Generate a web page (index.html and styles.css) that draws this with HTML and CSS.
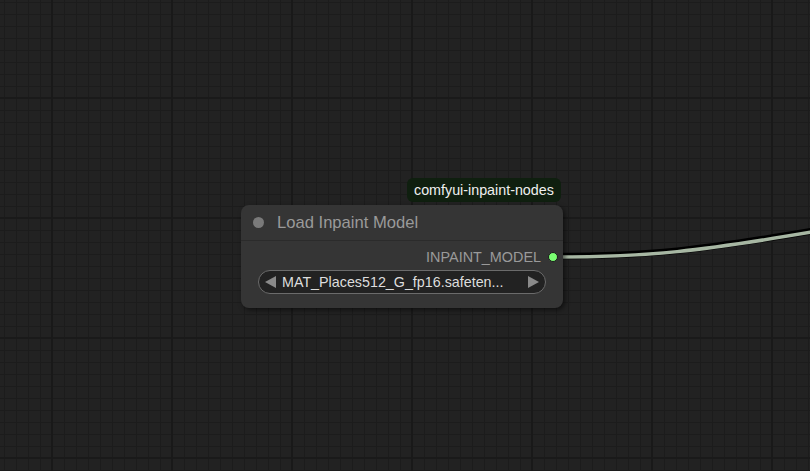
FILE: index.html
```html
<!DOCTYPE html>
<html>
<head>
<meta charset="utf-8">
<link rel="stylesheet" href="styles.css">
</head>
<body>
<div class="canvas">
  <svg class="links" width="810" height="471" viewBox="0 0 810 471">
    <path class="link-shadow" d="M556 257 C 650 257 700 251 812 232"/>
    <path class="link" d="M556 257 C 650 257 700 251 812 232"/>
  </svg>
  <div class="badge">comfyui-inpaint-nodes</div>
  <div class="node">
    <div class="node-title">
      <span class="title-dot"></span>
      <span class="title-text">Load Inpaint Model</span>
    </div>
    <div class="node-body">
      <div class="output-row">
        <span class="output-label">INPAINT_MODEL</span>
        <span class="output-dot"></span>
      </div>
      <div class="combo">
        <span class="arrow arrow-left"></span>
        <span class="combo-value">MAT_Places512_G_fp16.safeten...</span>
        <span class="arrow arrow-right"></span>
      </div>
    </div>
  </div>
</div>
</body>
</html>
```

FILE: styles.css
```css
html, body {
  margin: 0;
  padding: 0;
  width: 810px;
  height: 471px;
  overflow: hidden;
  background: #222222;
  font-family: "Liberation Sans", Arial, sans-serif;
}

.canvas {
  position: relative;
  width: 810px;
  height: 471px;
  background-color: #222222;
  background-image:
    linear-gradient(to right, #191919 0, #191919 2px, transparent 2px),
    linear-gradient(to bottom, #1a1a1a 0, #1a1a1a 2px, transparent 2px),
    linear-gradient(to right, #1c1c1c 0, #1c1c1c 1px, transparent 1px),
    linear-gradient(to bottom, #1c1c1c 0, #1c1c1c 1px, transparent 1px);
  background-size: 120px 120px, 120px 120px, 12px 12px, 12px 12px;
  background-position: 51px 0, 0 97px, 4px 0, 0 2px;
}

.links {
  position: absolute;
  left: 0;
  top: 0;
}

.link-shadow {
  fill: none;
  stroke: #000000;
  stroke-width: 6.5;
  transform: translate(0, -1px);
}

.link {
  fill: none;
  stroke: #a7b7a3;
  stroke-width: 3.5;
}

.badge {
  position: absolute;
  left: 407px;
  top: 178px;
  height: 24px;
  padding: 0 7px;
  display: flex;
  align-items: center;
  background: #0f1f0f;
  color: #f0f0f0;
  font-size: 14.3px;
  border-radius: 6px;
}

.node {
  position: absolute;
  left: 241px;
  top: 205px;
  width: 322px;
  height: 103px;
  background: #353535;
  border-radius: 8px;
  box-shadow: 2px 2px 5px rgba(0, 0, 0, 0.55);
  display: flex;
  flex-direction: column;
}

.node-title {
  height: 35px;
  display: flex;
  align-items: center;
  padding-left: 12px;
  border-bottom: 1px solid #2b2b2b;
}

.title-dot {
  width: 11px;
  height: 11px;
  border-radius: 50%;
  background: #7a7a7a;
  margin-right: 13px;
}

.title-text {
  color: #9a9a9a;
  font-size: 16.6px;
}

.node-body {
  display: flex;
  flex-direction: column;
  padding: 7px 17px 0 17px;
}

.output-row {
  height: 18px;
  display: flex;
  align-items: center;
  justify-content: flex-end;
  margin-right: -12px;
}

.output-label {
  color: #9a9a9a;
  font-size: 14.4px;
  margin-right: 7px;
}

.output-dot {
  width: 8px;
  height: 8px;
  border-radius: 50%;
  background: #7aff72;
  border: 1px solid #1a1a1a;
}

.combo {
  margin-top: 4px;
  height: 22px;
  border: 1px solid #6b6b6b;
  border-radius: 12px;
  background: #222222;
  display: flex;
  align-items: center;
  padding: 0 6px;
}

.arrow {
  width: 0;
  height: 0;
  border-top: 6px solid transparent;
  border-bottom: 6px solid transparent;
}

.arrow-left {
  border-right: 11px solid #8a8a8a;
}

.arrow-right {
  border-left: 11px solid #8a8a8a;
  margin-left: auto;
}

.combo-value {
  color: #dddddd;
  font-size: 14.3px;
  margin-left: 6px;
}
```
